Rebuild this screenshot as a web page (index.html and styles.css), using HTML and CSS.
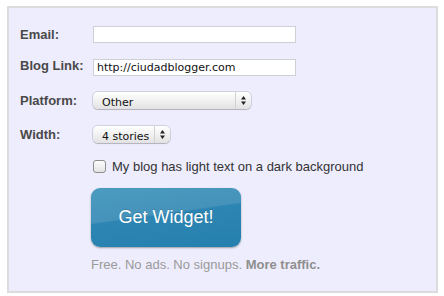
FILE: index.html
```html
<!DOCTYPE html>
<html lang="en">
<head>
    <meta charset="UTF-8">
    <title>Get Widget</title>
    <link rel="stylesheet" href="styles.css">
</head>
<body>
    <div class="panel">
        <form class="widget-form">
            <div class="row">
                <label class="label" for="email">Email:</label>
                <input class="text-input" id="email" type="text">
            </div>
            <div class="row">
                <label class="label label-up" for="blog">Blog Link:</label>
                <input class="text-input" id="blog" type="text" value="http://ciudadblogger.com">
            </div>
            <div class="row row-loose">
                <label class="label" for="platform">Platform:</label>
                <span class="select select-wide">
                    <select id="platform"><option>Other</option></select>
                    <span class="arrows">
                        <svg width="5" height="9" viewBox="0 0 5 9"><path d="M2.5 0L5 3.5H0z M2.5 9L0 5.5H5z" fill="#222"/></svg>
                    </span>
                </span>
            </div>
            <div class="row row-loose">
                <label class="label" for="width">Width:</label>
                <span class="select select-narrow">
                    <select id="width"><option>4 stories</option></select>
                    <span class="arrows">
                        <svg width="5" height="9" viewBox="0 0 5 9"><path d="M2.5 0L5 3.5H0z M2.5 9L0 5.5H5z" fill="#222"/></svg>
                    </span>
                </span>
            </div>
            <div class="row row-check">
                <label class="check"><input type="checkbox"> My blog has light text on a dark background</label>
            </div>
            <div class="submit">
                <button class="get-button" type="button">Get Widget!</button>
                <p class="note">Free. No ads. No signups. <b>More traffic.</b></p>
            </div>
        </form>
    </div>
</body>
</html>
```

FILE: styles.css
```css
* {
    margin: 0;
    padding: 0;
    box-sizing: border-box;
}

body {
    background: #fff;
    font-family: "Liberation Sans", Arial, sans-serif;
    padding: 6px 6px 3px 7px;
}

.panel {
    width: 431px;
    height: 287px;
    background: #eeedfd;
    border: 2px solid #dcdcdf;
    padding: 18px 0 0 11px;
}

.row {
    display: flex;
    align-items: center;
    height: 17px;
    margin-bottom: 16px;
}

.row-loose {
    margin-bottom: 17px;
}

.row-check {
    height: 13px;
    margin-bottom: 15px;
    padding-left: 73px;
}

.label {
    width: 73px;
    font-size: 13px;
    font-weight: bold;
    color: #494949;
}

.label-up {
    margin-top: -4px;
}

.text-input {
    width: 203px;
    height: 17px;
    border: 1px solid #cfcfd6;
    background: #fff;
    font-family: "DejaVu Sans", sans-serif;
    font-size: 11px;
    color: #111;
    padding: 0 3px;
    outline: none;
}

.select {
    position: relative;
    display: inline-block;
    height: 17px;
    border-radius: 5px;
    background: linear-gradient(#ffffff, #f1f1f1 50%, #e2e2e2);
    box-shadow: 0 0 0 1px rgba(0, 0, 0, 0.12), 0 1px 1px rgba(0, 0, 0, 0.15);
}

.select select {
    appearance: none;
    -webkit-appearance: none;
    border: none;
    background: transparent;
    width: 100%;
    height: 17px;
    font-family: "DejaVu Sans", sans-serif;
    font-size: 11px;
    color: #111;
    padding: 0 0 0 9px;
    outline: none;
}

.select-wide {
    width: 158px;
}

.select-narrow {
    width: 77px;
}

.arrows {
    position: absolute;
    right: 0;
    top: 0;
    width: 16px;
    height: 17px;
    border-left: 1px solid #d2d2d2;
    display: flex;
    align-items: center;
    justify-content: center;
    pointer-events: none;
}

.check {
    display: flex;
    align-items: center;
    font-size: 13px;
    color: #333;
}

.check input {
    appearance: none;
    -webkit-appearance: none;
    width: 13px;
    height: 13px;
    margin-right: 6px;
    border: 1px solid #8e8e8e;
    border-radius: 3px;
    background: linear-gradient(#fdfdfd, #e3e3e3);
}

.submit {
    padding-left: 71px;
}

.get-button {
    display: block;
    width: 150px;
    height: 59px;
    border: none;
    border-radius: 9px;
    background: linear-gradient(172deg, #4b9bc0, #4592ba 44%, #2c85b2 46%, #2680ad);
    box-shadow: 0 1px 2px rgba(0, 0, 0, 0.35);
    color: #fff;
    font-family: "Liberation Sans", Arial, sans-serif;
    font-size: 18px;
    text-shadow: 0 -1px 0 rgba(0, 0, 0, 0.15);
}

.note {
    margin-top: 10px;
    font-size: 13px;
    color: #999;
}

.note b {
    color: #8f8f8f;
}
```
